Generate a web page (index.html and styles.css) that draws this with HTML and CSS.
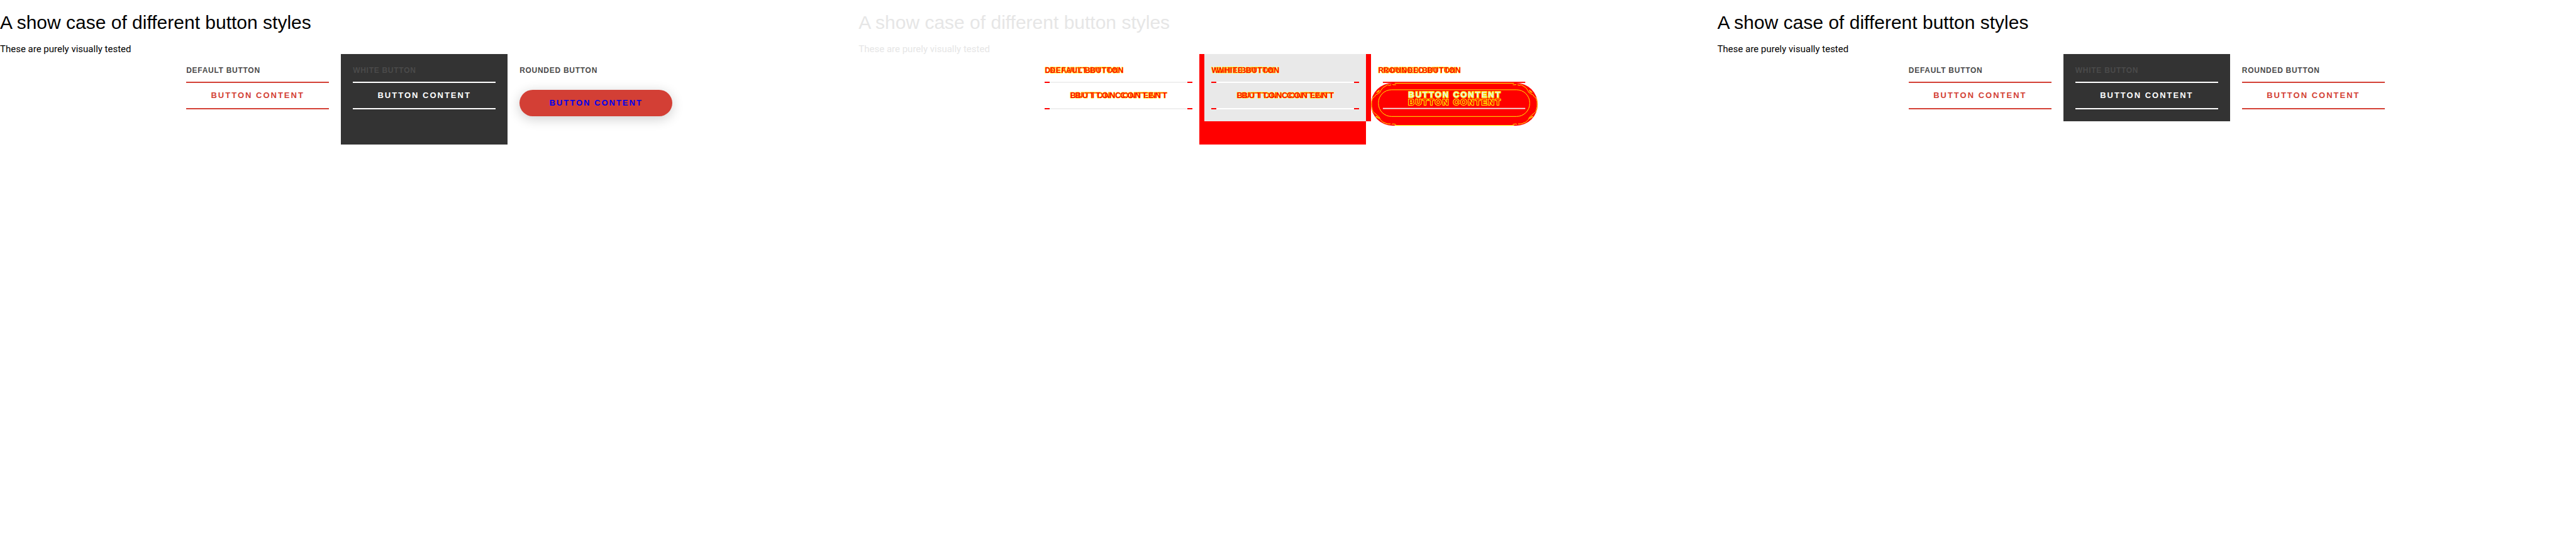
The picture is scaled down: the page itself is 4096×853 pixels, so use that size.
FILE: index.html
```html
<!DOCTYPE html>
<html lang="en">
<head>
<meta charset="utf-8">
<title>Button styles</title>
<link rel="stylesheet" href="styles.css">
</head>
<body>
<main class="compare">
  <section class="panel">
    <h1 class="heading">A show case of different button styles</h1>
    <p class="intro">These are purely visually tested</p>
    <div class="row">
      <div class="cell"><h2 class="label">Default button</h2><button class="btn">Button content</button></div>
      <div class="cell dark"><h2 class="label">White button</h2><button class="btn white">Button content</button></div>
      <div class="cell"><h2 class="label">Rounded button</h2><button class="btn rounded">Button content</button></div>
    </div>
  </section>
  <section class="panel diff">
    <h1 class="heading">A show case of different button styles</h1>
    <p class="intro">These are purely visually tested</p>
    <div class="row">
      <div class="cell"><h2 class="label ghost"><span>Default button</span><span class="shift" aria-hidden="true">Default button</span></h2><button class="btn ghost"><span>Button content</span><span class="shift" aria-hidden="true">Button content</span></button></div>
      <div class="cell overlap"><h2 class="label ghost"><span>White button</span><span class="shift" aria-hidden="true">White button</span></h2><button class="btn ghost pale"><span>Button content</span><span class="shift" aria-hidden="true">Button content</span></button></div>
      <div class="cell tight"><h2 class="label ghost"><span>Rounded button</span><span class="shift" aria-hidden="true">Rounded button</span></h2>
        <button class="blob">
          <svg class="blob-shape" viewBox="0 0 282 76" aria-hidden="true">
            <rect x="20" y="0" width="240" height="2" fill="#f00"/>
            <rect x="0" y="2" width="281" height="72" rx="36" fill="#f00"/>
            <path d="M40 2.500H241M40 73.500H241" stroke="#ff0"/>
            <g id="contour" fill="none" stroke="#ff0">
              <path d="M42 5H37L36 4M34 5L31 6L28 5L20 10L17 14L15 18L12 20L8 22L6 25L3 27L1 33V42L3 50L6 53L10 56L14 60L16 64L20 68L25 70L28 71H33M35 72L37 71L42 72"/>
              <path d="M9 18L14 14L13 17L10 18M8 59L14 62L11 59L8 58"/>
            </g>
            <use href="#contour" transform="translate(281 0) scale(-1 1)"/>
            <rect x="12.500" y="13.500" width="255" height="45" rx="22" fill="none" stroke="#ff0"/>
            <path fill="#f0f0f0" d="M20 44h240v2H20z"/>
          </svg>
          <span class="blob-text"><span class="lit">Button content</span><span class="hollow" aria-hidden="true">Button content</span></span>
        </button>
      </div>
    </div>
  </section>
  <section class="panel">
    <h1 class="heading">A show case of different button styles</h1>
    <p class="intro">These are purely visually tested</p>
    <div class="row">
      <div class="cell"><h2 class="label">Default button</h2><button class="btn">Button content</button></div>
      <div class="cell dark"><h2 class="label">White button</h2><button class="btn white">Button content</button></div>
      <div class="cell"><h2 class="label">Rounded button</h2><button class="btn">Button content</button></div>
    </div>
  </section>
</main>
</body>
</html>
```
FILE: styles.css
```css
* { box-sizing: border-box; }
body { margin: 0; background: #fff; color: #000; font-family: "Liberation Sans", Arial, sans-serif; }
.compare { display: grid; grid-template-columns: repeat(3, 1fr); min-height: 100vh; }
.heading { margin: 18px 0 16px; font-size: 30px; line-height: 36px; font-weight: 400; }
.intro { margin: 0; font: 15px/16px Roboto, sans-serif; }
.row { display: flex; justify-content: center; }
.cell { padding: 19px; }
.dark { background: #333; }
.label { margin: 0; height: 25px; font-size: 12px; line-height: 14px; font-weight: 700; letter-spacing: 0.06em; color: #4a4a4a; text-transform: uppercase; white-space: nowrap; }
.btn { display: block; width: 227px; height: 44px; padding: 0; border: solid #d33f35; border-width: 2px 0; background: none; color: #d33f35; font: 700 13px/16px "Liberation Sans", Arial, sans-serif; letter-spacing: 2px; text-transform: uppercase; }
.white { border-color: #fff; color: #fff; }
.rounded { width: 243px; height: 42px; margin: 13px 0 26px; border: 0; border-radius: 21px; background: #d33f35; color: #00e; box-shadow: 0 4px 19px rgba(0, 0, 0, .2); }

/* Difference view */
.diff .heading, .diff .intro { color: #e6e6e6; }
.diff .row { padding-left: 4px; }
.diff .cell { padding-right: 11px; }
.diff .tight { padding-left: 11px; }
.ghost { display: grid; justify-items: start; align-content: start; color: #f00; -webkit-text-stroke: 1px #ff0; paint-order: stroke; }
.ghost span { grid-area: 1 / 1; }
.ghost .shift { padding-left: 8px; }
.btn.ghost { width: 235px; padding-left: 40px; align-content: center; color: #f00; border-image: linear-gradient(90deg, #f00 8px, #efefef 8px 227px, #f00 227px) 2 0; }
.btn.ghost.pale { border-image: linear-gradient(90deg, #f00 8px, #fff 8px 227px, #f00 227px) 2 0; }
.diff .overlap { padding-right: 19px; background: linear-gradient(#e9e9e9, #e9e9e9) 8px 0 / 257px 107px no-repeat, linear-gradient(#f00, #f00) 0 0 / 273px 107px no-repeat, linear-gradient(#f00, #f00) 0 0 / 265px 144px no-repeat; }
.blob { display: grid; width: 266px; height: 72px; margin: 0 0 9px -11px; padding: 0; border: 0; background: none; font: 700 13px/16px "Liberation Sans", Arial, sans-serif; letter-spacing: 2px; text-transform: uppercase; }
.blob-shape { grid-area: 1 / 1; width: 266px; height: 72px; }
.blob-text { grid-area: 1 / 1; display: grid; grid-template-rows: 12px 12px; align-content: start; justify-content: center; padding-top: 13px; z-index: 1; -webkit-text-stroke: 2px #ff0; paint-order: stroke; }
.lit { color: #e8e8e8; }
.hollow { color: #f00; }
```
